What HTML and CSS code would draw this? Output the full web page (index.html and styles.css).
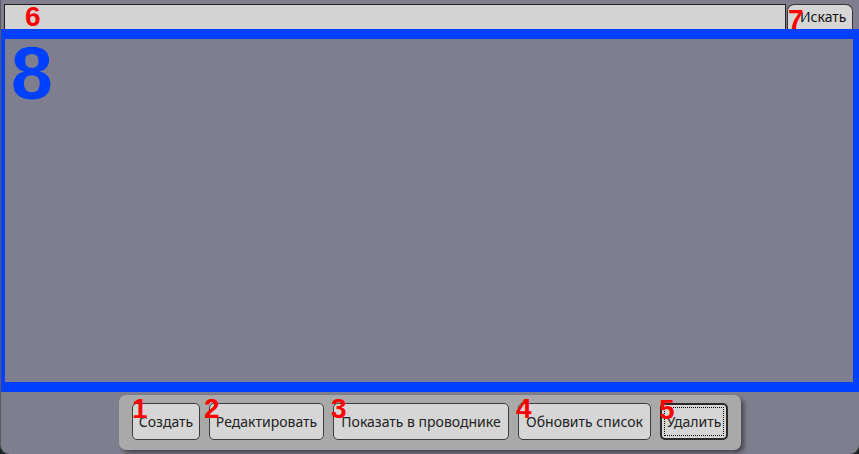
FILE: index.html
```html
<!DOCTYPE html>
<html lang="ru">
<head>
<meta charset="utf-8">
<link rel="stylesheet" href="styles.css">
</head>
<body>
<div class="window">
  <div class="topbar">
    <span class="tag tag-6">6</span>
    <div class="search-box"></div>
    <div class="search-btn"><span class="tag tag-7">7</span>Искать</div>
  </div>
  <div class="frame">
    <div class="big-tag">8</div>
  </div>
  <div class="bottom">
    <div class="panel">
      <div class="btn btn-create"><span class="tag tag-btn tag-1">1</span>Создать</div>
      <div class="btn btn-edit"><span class="tag tag-btn tag-2">2</span>Редактировать</div>
      <div class="btn btn-show"><span class="tag tag-btn">3</span>Показать в проводнике</div>
      <div class="btn btn-refresh"><span class="tag tag-btn">4</span>Обновить список</div>
      <div class="btn btn-default"><span class="tag tag-btn">5</span>Удалить</div>
    </div>
  </div>
</div>
</body>
</html>
```
FILE: styles.css
```css
html, body {
  margin: 0;
  padding: 0;
}
body {
  width: 859px;
  height: 454px;
  overflow: hidden;
  background: #1c2626;
  font-family: "Noto Sans", "Open Sans", sans-serif;
}
.window {
  height: 454px;
  background: #7f7e8f;
  border-radius: 0 0 9px 9px;
  display: flex;
  flex-direction: column;
  border-left: 1px solid #5a5a60;
  box-sizing: border-box;
}
.topbar {
  position: relative;
  display: flex;
  gap: 1px;
  height: 29px;
  padding: 4px 6px 0 3px;
  box-sizing: border-box;
}
.search-box {
  flex: 1;
  background: #d3d3d3;
  border: 1px solid #222;
  border-bottom: none;
}
.search-btn {
  position: relative;
  width: 66px;
  box-sizing: border-box;
  background: #d6d6d6;
  border: 1px solid #333;
  border-bottom: none;
  border-radius: 7px 7px 0 0;
  font-size: 14px;
  color: #111;
  line-height: 24px;
  padding-left: 12px;
}
.frame {
  height: 363px;
  box-sizing: border-box;
  border-style: solid;
  border-color: #0040ff;
  border-width: 10px 6px 10px 4px;
  padding: 4px 0 0 6px;
}
.big-tag {
  font-family: "Liberation Sans", Arial, sans-serif;
  font-weight: bold;
  font-size: 75px;
  line-height: 60px;
  color: #0040ff;
}
.bottom {
  display: flex;
  justify-content: center;
  padding-top: 3px;
}
.panel {
  display: flex;
  gap: 9px;
  padding: 8px 13px 10px;
  background: #a9a9a9;
  border-radius: 7px;
  box-shadow: 3px 3px 4px rgba(0, 0, 0, 0.45);
}
.btn {
  position: relative;
  height: 37px;
  box-sizing: border-box;
  background: #d6d6d6;
  border: 1px solid #3c3c3c;
  border-radius: 5px;
  font-size: 14px;
  color: #222;
  line-height: 35px;
  text-align: center;
  white-space: nowrap;
}
.btn-create { width: 68px; }
.btn-edit { width: 115px; }
.btn-show { width: 176px; }
.btn-refresh { width: 133px; }
.btn-default {
  width: 68px;
  border: 2px solid #2a2a2a;
  line-height: 33px;
  outline: 1px dotted #000;
  outline-offset: -5px;
}
.tag {
  position: absolute;
  font-family: "Liberation Sans", Arial, sans-serif;
  font-weight: bold;
  font-size: 28px;
  line-height: 28px;
  color: #ff0000;
}
.tag-6 {
  left: 24px;
  top: 3px;
}
.tag-7 {
  left: 0;
  top: 1px;
}
.tag-btn {
  left: -3px;
  top: -9px;
}
.tag-1 {
  left: -1px;
}
.tag-2 {
  left: -6px;
}
```
